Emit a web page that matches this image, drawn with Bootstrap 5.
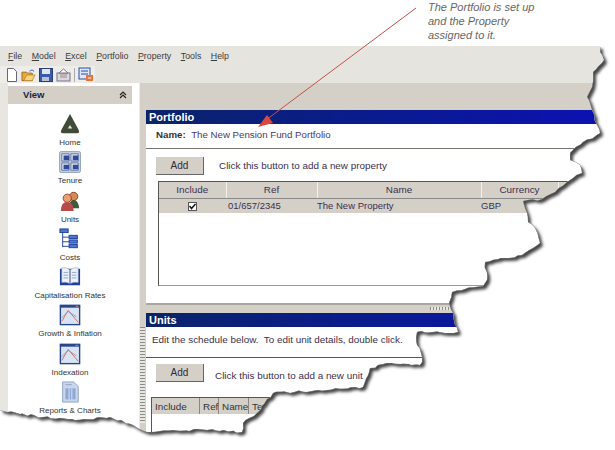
<!doctype html>
<html lang="en">

<head>
    <meta charset="UTF-8">
    <meta name="viewport" content="width=device-width, initial-scale=1.0">
    <title>Portfolio</title>
    <link href="https://cdn.jsdelivr.net/npm/bootstrap@5.3.0/dist/css/bootstrap.min.css" rel="stylesheet">
    <style>
        html, body { background: #fff; }
        body { font-family: "Liberation Sans", Arial, sans-serif; font-size: 9.9px; line-height: 12px; color: #3a2f4a; }
        .shot { width: 615px; height: 450px; overflow: hidden; position: relative; background: #fff; }
        .top-gap { height: 46px; }
        .menu-strip { height: 37px; background: #e6e4df; }
        .menu-row { height: 20px; gap: 9.5px; padding-left: 8px; color: #3c3c3c; font-size: 8.8px; }
        .menu-row u { text-decoration-thickness: 1px; }
        .tool-row { height: 17px; width: 95px; gap: 3px; padding-left: 6px; background: #eeede9; }
        .tool-row svg { flex: none; }
        .tool-sep { width: 1px; height: 14px; background: #aaa; }
        .app-body { height: 367px; background: #d4d0c8; }
        .side-gutter { width: 8px; background: #e8e6e0; }
        .side-panel { width: 124px; background: #fff; padding-top: 3px; }
        .side-head { height: 18px; background: #d4d0c8; padding: 0 5px 0 15px; font-weight: 700; font-size: 9.5px; color: #23233f; }
        .side-list { padding-top: 8px; }
        .side-item { height: 38.3px; color: #333; font-size: 8px; line-height: 11px; }
        .side-item svg { display: block; height: 22px; width: 22px; margin: 1px 0 2px; }
        .side-white { width: 8px; background: #fff; border-right: 1px solid #eeece8; }
        .main-area { flex: 1; padding-top: 27px; min-width: 0; }
        .vsplit { width: 6px; }
        .vgrip { height: 96px; margin-top: 244px; width: 5px; background: repeating-linear-gradient(#8c8c8c 0 1px, #e8e6e0 1px 3px); }
        .win-head { height: 14px; padding-left: 3px; color: #fff; font-weight: 700; font-size: 11px; line-height: 14px; background: linear-gradient(90deg, #0a246a, #0a12b4); }
        .win-body { background: #fff; border-bottom: 2px solid #aaa7a0; }
        .win-portfolio { height: 181px; }
        .name-row { height: 25px; padding: 5px 0 0 10px; border-bottom: 1px solid #77756f; color: #4a3a60; font-size: 9.7px; }
        .name-row b { color: #333; margin-right: 3px; }
        .add-row { padding: 8px 0 0 10px; gap: 15px; }
        .add-btn { width: 48px; height: 18px; padding: 0; border: 0; border-radius: 0; font-size: 10px; line-height: 16px; color: #2c2c3c; background: #d4d0c8; border-bottom: 1px solid #666; border-right: 1px solid #666; }
        .grid-box { margin: 6px 0 0 12px; height: 105px; width: 500px; border: 1px solid #555; border-right: 0; border-bottom-color: #999; }
        .grid-tbl { table-layout: fixed; border-collapse: collapse; width: 500px; }
        .grid-tbl th { font-weight: 400; text-align: center; background: #d4d0c8; height: 16px; padding: 0; border-right: 1px solid #f2f1ed; border-bottom: 1px solid #888; color: #3a3050; }
        .grid-tbl td { background: #d4d0c8; height: 15px; padding: 1px 0 0; color: #3a3050; font-size: 9.5px; }
        .cell-ref { padding-left: 2px !important; }
        .tick-box { display: inline-block; vertical-align: middle; width: 9px; height: 9px; background: #fff; border: 1px solid #555; }
        .tick-box svg { display: block; }
        .hsplit { height: 7px; position: relative; }
        .hgrip { width: 26px; height: 3px; margin: 2px 0 0 284px; background: repeating-linear-gradient(90deg, #8c8c8c 0 1px, #e8e6e0 1px 3px); }
        .win-units { margin-top: -1px; }
        .units-note { height: 31px; padding: 7px 0 0 6px; border-bottom: 1px solid #555; }
        .add-units { padding: 6px 0 0 10px; gap: 11px; }
        .add-units span { padding-top: 5px; }
        .units-box { margin: 15px 0 0 5px; border: 1px solid #555; height: 60px; width: 300px; }
        .units-cols { height: 16px; background: #d4d0c8; color: #333; }
        .units-cols span { padding: 1px 2px 0 3px; border-right: 1px solid #888; line-height: 15px; }
        .tear-layer { position: absolute; left: 0; top: 0; width: 615px; height: 450px; pointer-events: none; }
        .note-layer { position: absolute; left: 0; top: 0; width: 615px; height: 450px; pointer-events: none; }
        .note-text { position: absolute; left: 428px; top: 0; font-style: italic; font-size: 11px; line-height: 14px; color: #666; }
    </style>
</head>

<body>
    <div class="shot">
        <div class="top-gap"></div>

        <div class="menu-strip">
            <div class="menu-row d-flex align-items-center">
                <span><u>F</u>ile</span><span><u>M</u>odel</span><span><u>E</u>xcel</span><span><u>P</u>ortfolio</span><span><u>P</u>roperty</span><span><u>T</u>ools</span><span><u>H</u>elp</span>
            </div>
            <div class="tool-row d-flex align-items-center">
                <svg width="12" height="14" viewBox="0 0 12 14"><path d="M1.500.5h6l3 3v10h-9z" fill="#fff" stroke="#667"/></svg>
                <svg width="15" height="14" viewBox="0 0 16 14"><path d="M1 4h5l1 1h5v8H1z" fill="#e8a93c" stroke="#a06a18"/><path d="M3 13l3-6h9l-3 6z" fill="#f7d37a" stroke="#a06a18" stroke-width=".6"/><path d="M9 3q3-3 5 0" fill="none" stroke="#2a5fc0"/></svg>
                <svg width="14" height="14" viewBox="0 0 14 14"><rect x=".5" y=".5" width="13" height="13" fill="#3b5cab" stroke="#27407c"/><rect x="3" y="1" width="8" height="5" fill="#dfe6f5"/><rect x="3" y="9" width="7" height="4" fill="#b8c4dc"/></svg>
                <svg width="15" height="14" viewBox="0 0 15 14"><rect x="1" y="5" width="13" height="8" fill="#d8d8e0" stroke="#778"/><path d="M3 5l4.500-4L12 5z" fill="#fff" stroke="#778"/><path d="M4 7h7M4 9h7" stroke="#a88"/></svg>
                <span class="tool-sep"></span>
                <svg width="16" height="15" viewBox="0 0 16 15"><rect x="1" y="1" width="11" height="11" fill="#dfe8f8" stroke="#2c4ca0"/><path d="M3 4h7M3 7h7" stroke="#2c4ca0"/><path d="M8 8h7v6H8z" fill="#e8743c"/><path d="M10 11h3" stroke="#fff"/></svg>
            </div>
        </div>

        <div class="app-body d-flex">
            <div class="side-gutter"></div>
            <div class="side-panel">
                <div class="side-head d-flex align-items-center justify-content-between">
                    <span>View</span>
                    <svg width="8" height="8" viewBox="0 0 8 8"><path d="M1 4l3-3 3 3M1 7l3-3 3 3" fill="none" stroke="#222" stroke-width="1.200"/></svg>
                </div>
                <div class="side-list" id="sideList"></div>
            </div>
            <div class="side-white"></div>
            <div class="vsplit"><div class="vgrip"></div></div>
            <div class="main-area">
                <div class="win-head">Portfolio</div>
                <div class="win-body win-portfolio">
                    <div class="name-row"><b>Name:</b> The New Pension Fund Portfolio</div>
                    <div class="add-row d-flex align-items-center">
                        <button type="button" class="btn add-btn">Add</button>
                        <span>Click this button to add a new property</span>
                    </div>
                    <div class="grid-box">
                        <table class="grid-tbl">
                            <colgroup>
                                <col style="width:67px"><col style="width:91px"><col style="width:164px"><col style="width:77px"><col>
                            </colgroup>
                            <tr><th>Include</th><th>Ref</th><th>Name</th><th>Currency</th><th></th></tr>
                            <tr>
                                <td class="text-center"><span class="tick-box"><svg width="7" height="7" viewBox="0 0 7 7"><path d="M.5 3l2 2.500L6.500 1" fill="none" stroke="#111" stroke-width="1.500"/></svg></span></td>
                                <td class="cell-ref">01/657/2345</td>
                                <td>The New Property</td>
                                <td>GBP</td>
                                <td></td>
                            </tr>
                        </table>
                    </div>
                </div>
                <div class="hsplit"><div class="hgrip"></div></div>
                <div class="win-head win-units">Units</div>
                <div class="win-body border-0">
                    <div class="units-note">Edit the schedule below.&nbsp; To edit unit details, double click.</div>
                    <div class="add-units d-flex align-items-center">
                        <button type="button" class="btn add-btn">Add</button>
                        <span>Click this button to add a new unit</span>
                    </div>
                    <div class="units-box">
                        <div class="units-cols d-flex">
                            <span style="width:48px">Include</span><span style="width:19px">Ref</span><span style="width:30px">Name</span><span>Tenant</span>
                        </div>
                    </div>
                </div>
            </div>
        </div>

        <svg class="tear-layer" viewBox="0 0 615 450">
            <defs>
                <filter id="soft" x="-10%" y="-10%" width="120%" height="120%"><feGaussianBlur stdDeviation="1.800"/></filter>
                <clipPath id="outsideClip"><path id="outsideClipPath" clip-rule="evenodd" d=""/></clipPath>
            </defs>
            <path id="tearMask" fill="#fff" fill-rule="evenodd" d=""/>
            <g clip-path="url(#outsideClip)">
                <path id="tearShadow" fill="#444" filter="url(#soft)" transform="translate(3 3)" d=""/>
                <path id="tearLine" fill="none" stroke="#8a8a8a" stroke-width=".8" d=""/>
            </g>
        </svg>

        <div class="note-layer">
            <svg class="tear-layer" viewBox="0 0 615 450">
                <path d="M416 8L266 120" stroke="#c8504a" stroke-width="1" fill="none"/>
                <path d="M258 127L267 115L273 123z" fill="#d9483e"/>
            </svg>
            <div class="note-text">The Portfolio is set up<br>and the Property<br>assigned to it.</div>
        </div>
    </div>

    <script>
        // Sidebar shortcuts
        const iconHome = '<path d="M12 1L21.500 18.500Q23 22 19.500 22H4.500Q1 22 2.500 18.500z" fill="#3f4a38"/><path d="M12 13l2.500 4h-5z" fill="#dfe3da"/>';
        const iconTenure = '<rect x=".5" y=".5" width="23" height="23" rx="2" fill="#c3cede" stroke="#8fa0bc"/><path d="M3 3h8v8H3zM13 3h8v8h-8zM3 13h8v8H3zM13 13h8v8h-8z" fill="#dfe6f0" stroke="#5e74a4"/><path d="M5 5h6v5H5zM15 5h6v5h-6zM5 15h6v5H5zM15 15h6v5h-6z" fill="#2f4a96"/>';
        const iconUnits = '<circle cx="16" cy="7" r="4.500" fill="#d88a50" stroke="#8c3a22"/><path d="M11 20q0-9 5-9t6 9z" fill="#3f5a3a"/><circle cx="9" cy="9" r="4.500" fill="#e8a070" stroke="#8c3a22"/><path d="M2 23q0-10 7-10t7 10z" fill="#b84a4a"/>';
        const iconCosts = '<rect x="1" y="1" width="9" height="4" fill="#4a76d0" stroke="#1f3f98"/><path d="M4 5v16M4 10h7M4 15h7M4 20h7" stroke="#1f3f98" fill="none"/><rect x="11" y="8" width="9" height="3.500" fill="#4a76d0" stroke="#1f3f98"/><rect x="11" y="13" width="9" height="3.500" fill="#4a76d0" stroke="#1f3f98"/><rect x="11" y="18" width="9" height="3.500" fill="#4a76d0" stroke="#1f3f98"/>';
        const iconBook = '<rect x="1" y="3" width="22" height="18" fill="#1f3f98"/><path d="M3 2q5-1 8.500 2v15q-4-2-8.500-1zM21 2q-5-1-8.500 2v15q4-2 8.500-1z" fill="#eef1f8" stroke="#8ea0c8" stroke-width=".6"/><path d="M5 7h5M5 10h5M5 13h5M14 7h5M14 10h5M14 13h5" stroke="#8ea0c8"/>';
        const iconChart = '<rect x="1.500" y="1.500" width="21" height="21" fill="#d8e4f4" stroke="#28468c" stroke-width="1.500"/><rect x="1" y="1" width="22" height="3" fill="#28468c"/><path d="M18 2.500h3" stroke="#e08a60"/><path d="M3 19L10 7l11 13" fill="none" stroke="#d86a48"/><path d="M3 15l7-7 9 6" fill="none" stroke="#8a98b8"/>';
        const iconReport = '<path d="M4 1h12l5 5v17H4z" fill="#c8d6ec" stroke="#8ea0c0"/><path d="M7 8h11v12H7z" fill="#8ea8d4"/><path d="M11 8v12M14 8v12" stroke="#dfe7f4"/><path d="M7 4h7" stroke="#8ea0c0"/>';

        const sideItems = [
            ['Home', iconHome],
            ['Tenure', iconTenure],
            ['Units', iconUnits],
            ['Costs', iconCosts],
            ['Capitalisation Rates', iconBook],
            ['Growth & Inflation', iconChart],
            ['Indexation', iconChart],
            ['Reports & Charts', iconReport],
        ];

        document.getElementById('sideList').innerHTML = sideItems.map(item => `
            <div class="side-item d-flex flex-column align-items-center text-nowrap">
                <svg viewBox="0 0 24 24">${item[1]}</svg>
                <span>${item[0].replace('&', '&amp;')}</span>
            </div>`).join('');

        // Torn paper edge, control points read off the screenshot
        const tearPoints = [
            [600, 47], [604, 60], [593, 72], [592, 87], [587, 97], [592, 110], [597, 125], [600, 133], [583, 142],
            [570, 153], [570, 160], [580, 165], [582, 173], [573, 178], [567, 182], [555, 192], [542, 199], [523, 201],
            [527, 213], [528, 222], [535, 228], [540, 243], [522, 255], [485, 262], [487, 280], [483, 286], [452, 292],
            [449, 303], [453, 313], [457, 328], [458, 332], [417, 332], [417, 345], [422, 357], [420, 365], [387, 363],
            [370, 368], [363, 387], [327, 390], [273, 393], [257, 413], [243, 423], [242, 432], [207, 430], [173, 430],
            [147, 432], [133, 425], [110, 417], [75, 420], [43, 417], [7, 412], [0, 410],
        ];

        let seed = 7;
        function rnd() {
            seed = (seed * 16807) % 2147483647;
            return seed / 2147483647 - 0.5;
        }

        // break each stretch into short jagged steps
        const jagged = [];
        tearPoints.forEach((p, i) => {
            jagged.push(p);
            const next = tearPoints[i + 1];
            if (!next) return;
            const steps = Math.floor(Math.hypot(next[0] - p[0], next[1] - p[1]) / 4);
            for (let s = 1; s < steps; s++) {
                const t = s / steps;
                jagged.push([
                    (p[0] + (next[0] - p[0]) * t + rnd() * 2.2).toFixed(1),
                    (p[1] + (next[1] - p[1]) * t + rnd() * 2.2).toFixed(1),
                ]);
            }
        });

        const edgePath = 'M' + jagged.map(p => p.join(' ')).join('L');
        const appPath = 'M0 46L600 46L' + jagged.map(p => p.join(' ')).join('L') + 'Z';
        const pageRect = 'M0 0H615V450H0Z';

        document.getElementById('tearMask').setAttribute('d', pageRect + appPath);
        document.getElementById('outsideClipPath').setAttribute('d', pageRect + appPath);
        document.getElementById('tearShadow').setAttribute('d', appPath);
        document.getElementById('tearLine').setAttribute('d', edgePath);
    </script>
    <script src="https://cdn.jsdelivr.net/npm/bootstrap@5.3.0/dist/js/bootstrap.bundle.min.js"></script>
</body>

</html>
